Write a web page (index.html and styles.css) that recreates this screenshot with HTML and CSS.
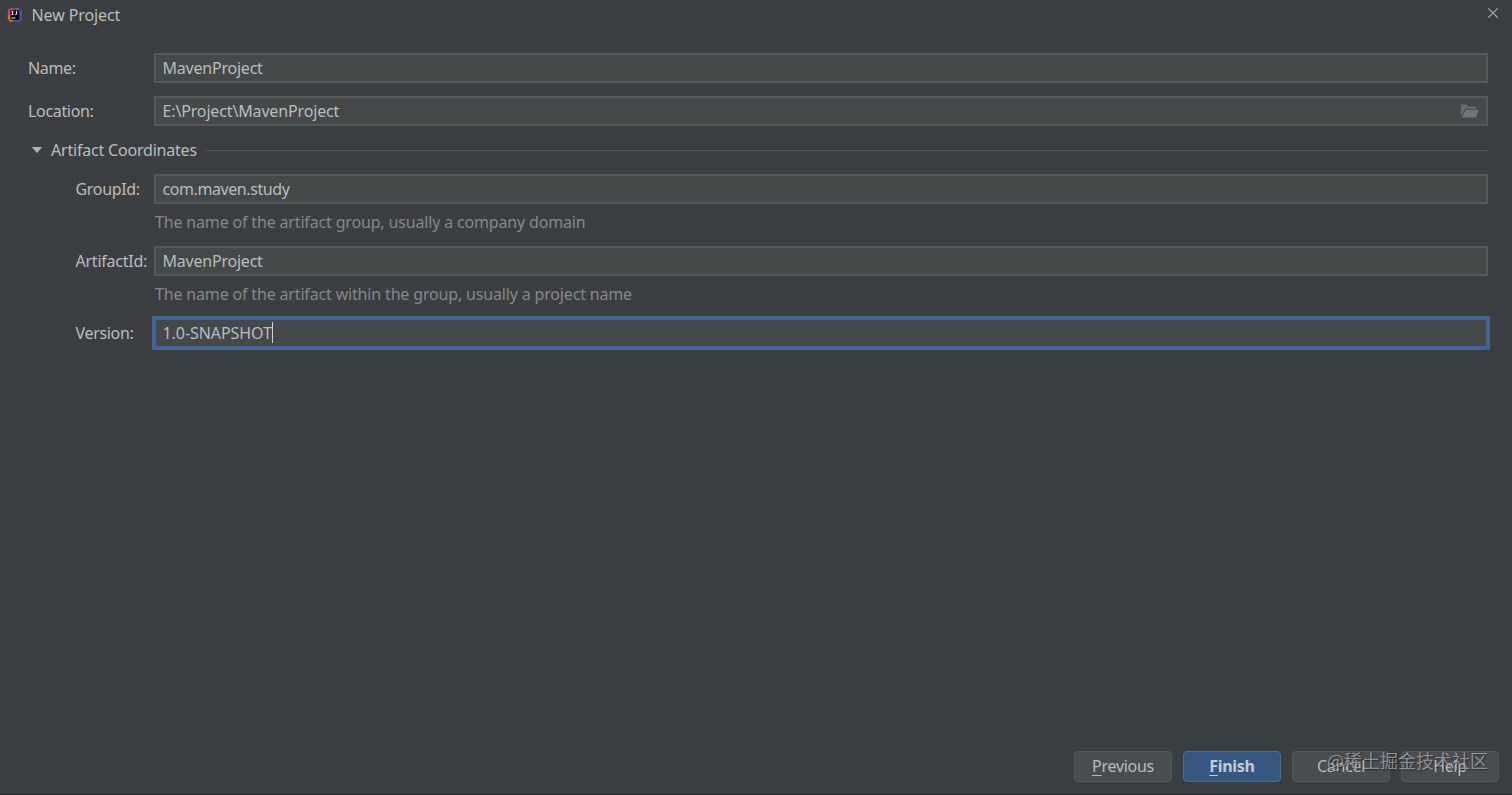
FILE: index.html
```html
<!DOCTYPE html>
<html lang="en">
<head>
<meta charset="utf-8">
<title>New Project</title>
<link rel="stylesheet" href="styles.css">
</head>
<body>
<div class="dialog">
  <header class="titlebar">
    <svg class="logo" width="16" height="16" viewBox="0 0 16 16">
      <path d="M1 2.5 5 .8 8 2v12l-5 .5L.8 11Z" fill="#d43b68"/>
      <path d="M.8 8 4 7l3 7-4 1-2-3Z" fill="#c8742f"/>
      <path d="M7 2 11 .8l4 3.2v9L11 15.5 6 14Z" fill="#4550c4"/>
      <path d="m8 1 3-.2 2 2-3 2Z" fill="#a348ad"/>
      <rect x="3.4" y="3.2" width="9" height="9.6" fill="#08070d"/>
      <path d="M4.5 4.5h2M5.5 4.5v3M4.5 7.5h2M9.5 4v2.7q0 .9-1.2.9M4.4 11h4" fill="none" stroke="#eee8d8" stroke-width="1.1"/>
    </svg>
    <h1 class="title">New Project</h1>
    <svg class="close" width="12" height="12" viewBox="0 0 12 12"><path d="m1.3 1.3 9.4 9.4M10.7 1.3 1.3 10.7" fill="none" stroke="#adb0b2" stroke-width="1.1"/></svg>
  </header>
  <main class="form">
    <div class="row"><label class="label">Name:</label><div class="field">MavenProject</div></div>
    <div class="row row-location"><label class="label">Location:</label><div class="field path">E:\Project\MavenProject
      <svg class="folder" width="18" height="14" viewBox="0 0 18 14"><path d="M0 .5h5.5l2 2h7.5v2.3H4.3L0 11.8Z" fill="#686c6e"/><path d="M4.9 5.8H18l-3 7.7H.6Z" fill="#727577"/></svg>
    </div></div>
    <div class="section">
      <svg class="arrow" width="12" height="8" viewBox="0 0 12 8"><path d="M.8 1h10.4L6 7Z" fill="#b0b3b5"/></svg>
      <span class="section-title">Artifact Coordinates</span>
      <div class="rule"></div>
    </div>
    <div class="row nested"><label class="label">GroupId:</label><div class="field group">com.maven.study</div></div>
    <p class="hint">The name of the artifact group, usually a company domain</p>
    <div class="row nested"><label class="label artifact">ArtifactId:</label><div class="field">MavenProject</div></div>
    <p class="hint">The name of the artifact within the group, usually a project name</p>
    <div class="row nested"><label class="label">Version:</label><div class="field focused">1.0-SNAPSHOT<i class="caret"></i></div></div>
  </main>
  <footer class="actions">
    <button class="button"><u>P</u>revious</button>
    <button class="button primary"><u>F</u>inish</button>
    <button class="button">Cancel</button>
    <button class="button">Help</button>
    <div class="watermark">@稀土掘金技术社区</div>
  </footer>
</div>
</body>
</html>
```
FILE: styles.css
```css
* { box-sizing: border-box; }
body { margin: 0; background: #3c3f41; }
.dialog {
  width: 1512px; height: 795px;
  display: flex; flex-direction: column;
  border-bottom: 1px solid #242629;
  background: #3c3f41; color: #b9bcbe;
  font: 16px/24px "Noto Sans", "Noto Sans CJK SC", sans-serif;
  white-space: nowrap; overflow: hidden;
}
.titlebar { display: flex; height: 53px; padding: 3px 13px 0 7px; align-items: flex-start; }
.logo { margin-top: 4px; }
.title { flex: 1; margin: 0 0 0 8.5px; font-size: 16px; font-weight: 400; letter-spacing: -.1px; }
.close { margin-top: 4px; }
.form { flex: 1; padding: 0 24px 0 28px; }
.row { display: flex; height: 30px; align-items: center; }
.row-location { margin-top: 13px; }
.label { width: 126px; flex: none; letter-spacing: -.33px; }
.nested { padding-left: 47.5px; }
.nested .label { width: 78.5px; }
.nested .artifact { letter-spacing: -.24px; }
.field {
  flex: 1; display: flex; align-items: center;
  height: 30px; padding: 0 7px 0 6.5px;
  border: 2px solid #55595a; background: #45494a;
  letter-spacing: -.22px;
}
.path { letter-spacing: -.15px; }
.group { letter-spacing: -.42px; }
.folder { margin-left: auto; }
.section { display: flex; align-items: center; height: 48px; padding-left: 3px; }
.section-title { letter-spacing: -.2px; }
.arrow { margin-right: 8px; }
.rule { flex: 1; height: 1px; margin-left: 8px; background: #515456; }
.hint { height: 42px; margin: 0 0 0 127px; padding-top: 5.5px; color: #85888a; letter-spacing: -.165px; }
.focused { height: 34px; margin: 0 -2px; padding: 0 7px 1px 6.5px; border: 4px solid #416693; letter-spacing: -.07px; }
.caret { width: 1px; height: 21px; background: #cfd1d2; }
.actions { position: relative; display: flex; justify-content: flex-end; gap: 11px; padding: 0 13px 12px 0; }
.button {
  width: 98px; height: 31px; padding: 0 0 2px;
  border: 1px solid #56595b; border-radius: 4px;
  background: #4a4e50; color: #b9bcbe; font: inherit; letter-spacing: -.3px;
}
.button u { text-decoration-thickness: 1px; text-underline-offset: 3px; }
.primary { border-color: #4a6c94; background: #365880; color: #c3cbd5; font-weight: 700; }
.watermark {
  position: absolute; right: 24px; top: -4px;
  color: rgba(190, 193, 195, .65); font: 18px/26px "Noto Sans CJK SC", sans-serif;
  text-shadow: 1px 1px 1px rgba(20, 22, 24, .6);
}
```
